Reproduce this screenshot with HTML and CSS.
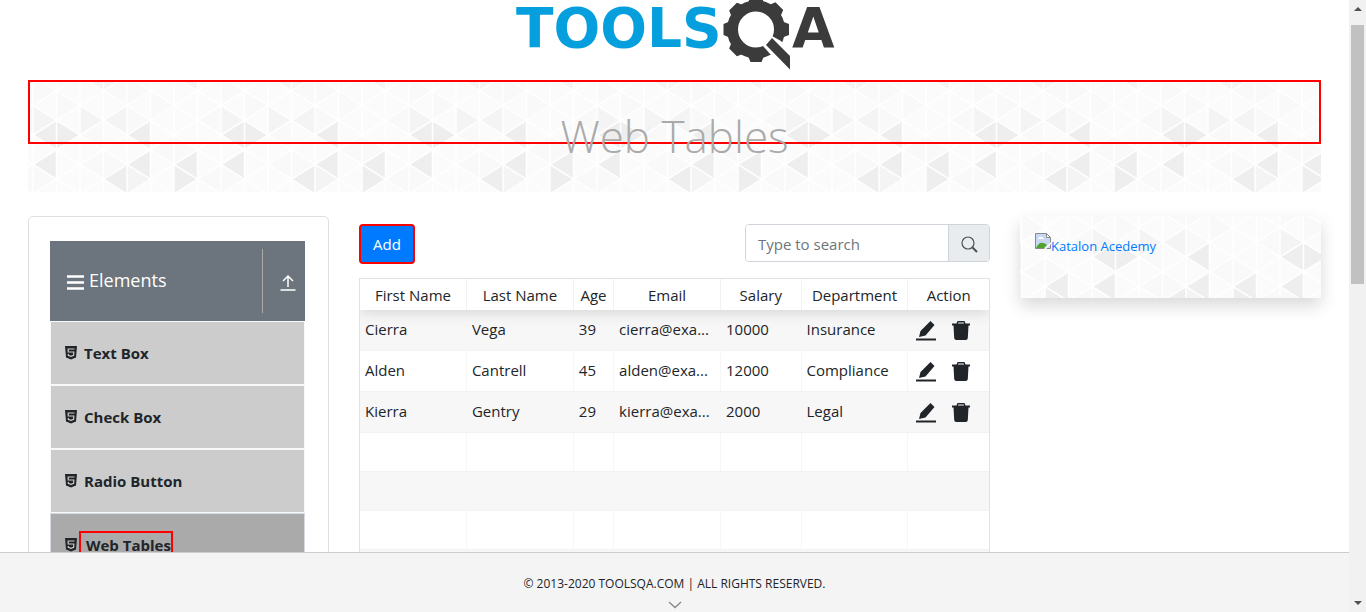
FILE: index.html
```html
<!DOCTYPE html>
<html lang="en">
<head>
<meta charset="utf-8">
<meta name="viewport" content="width=device-width, initial-scale=1">
<title>ToolsQA - Web Tables</title>
<link rel="stylesheet" href="styles.css">
</head>
<body>
<svg class="defs" aria-hidden="true">
  <defs>
    <pattern id="tri" x="5" y="-4" width="188" height="118" patternUnits="userSpaceOnUse">
      <rect width="188" height="118" fill="#fbfbfb"/>
      <path fill="#f9f9f9" d="M23.5 14.75v29.5L47 29.5zM47 59l23.5-14.75v29.5zM70.5 14.75L94 0v29.5zM94 29.5V59l23.5-14.75zM117.5 14.75v29.5L141 29.5zM141 59v29.5l23.5-14.75zM47 88.5l23.5-14.75v29.5zM70.5 73.75v29.5L94 88.5zM164.5 44.25L188 29.5V59zM117.5 73.75L141 59v29.5zM0 88.5V118l23.5-14.75zM94 0v29.5l23.5-14.75zM164.5 103.25L188 88.5V118zM0 0v29.5l23.5-14.75z"/>
      <path fill="#f4f4f4" d="M0 29.5V59l23.5-14.75zM47 29.5V59l23.5-14.75zM70.5 44.25L94 29.5V59zM70.5 14.75v-29.5L94 0zM47 0l23.5-14.75v29.5zM94 88.5V118l23.5-14.75zM141 0l23.5-14.75v29.5z"/>
      <path fill="#eee" d="M0 59l23.5-14.75v29.5zM23.5 44.25v29.5L47 59zM94 59l23.5-14.75v29.5zM0 88.5l23.5-14.75v29.5zM94 88.5l23.5-14.75v29.5zM141 88.5l23.5-14.75v29.5zM141 88.5V118l23.5-14.75zM70.5 103.25L94 88.5V118z"/>
      <path fill="none" stroke="#fff" stroke-width="1.5" d="M0 0v118M23.5 0v118M47 0v118M70.5 0v118M94 0v118M117.5 0v118M141 0v118M164.5 0v118M188 0v118M0 0l188 118M0 29.5l188 118M0 59l188 118M0 88.5l188 118M0-29.5l188 118M0-59L188 59M0-88.5l188 118M0-118L188 0M0 0l188-118M0 29.5l188-118M0 59L188-59M0 88.5l188-118M0 118L188 0M0 147.5l188-118M0 177L188 59M0 206.5l188-118"/>
    </pattern>
    <pattern id="tri-card" href="#tri" x="72" y="-18"/>
    <symbol id="html5" viewBox="0 0 12 14"><path fill="currentColor" d="M0 0h12l-1 11.500-5 2-5-2z"/><path fill="none" stroke="#ccc" stroke-width="1.200" d="M9.500 3H3.200v3h5.600l-.2 3.300-2.600 1-2.700-1V8"/></symbol>
    <symbol id="pencil" viewBox="0 0 20 20"><path fill="currentColor" d="M14.500 0l4 4-9 10.500-6.500 1.500 1.500-6zM0 17.500h20v2H0z"/></symbol>
    <symbol id="trash" viewBox="0 0 18 19"><path fill="currentColor" fill-rule="evenodd" d="M5.500 0h7l1 2.500H18v2h-1.500L15.800 17q-.2 2-2 2H4.200q-1.800 0-2-2L1.500 4.500H0v-2h4.500zm.8 1.500l-.4 1h6.200l-.4-1z"/></symbol>
  </defs>
</svg>

<div class="page">
  <main class="content">
    <header class="brand">
      <a href="#" aria-label="ToolsQA home">
        <svg class="logo" viewBox="0 0 350 75" aria-hidden="true">
          <text class="logo-blue" x="16" y="47">TOOLS</text>
          <g fill="#3b3b3c">
            <circle cx="256" cy="29.500" r="23.500" fill="none" stroke="#3b3b3c" stroke-width="11"/>
            <path d="M248 3l2.500-6.500h11l2.500 6.500zM248 56l2.500 6h11l2.500-6z"/>
            <path d="M248 3l2.500-6.500h11l2.500 6.500zM248 56l2.500 6h11l2.500-6z" transform="rotate(45 256 29.500)"/>
            <path d="M248 3l2.500-6.500h11l2.500 6.500zM248 56l2.500 6h11l2.500-6z" transform="rotate(90 256 29.500)"/>
            <path d="M248 3l2.500-6.500h11l2.500 6.500zM248 56l2.500 6h11l2.500-6z" transform="rotate(135 256 29.500)"/>
            <path fill="#fff" d="M263 46l9-10 9 5 12 14v18h-6z"/>
            <path d="M266 45l6-7 18 18v13.500z"/>
          </g>
          <text class="logo-dark" x="292" y="47">A</text>
        </svg>
      </a>
    </header>

    <section class="banner">
      <svg class="texture" aria-hidden="true"><rect width="100%" height="100%" fill="url(#tri)"/></svg>
      <div class="banner-mark"></div>
      <h1 class="banner-title">Web Tables</h1>
    </section>

    <div class="columns">
      <nav class="sidebar" aria-label="Elements">
        <div class="group">
          <svg class="burger" viewBox="0 0 17 15" aria-hidden="true"><path stroke="#fff" stroke-width="2.500" d="M0 1.500h17M0 7.500h17M0 13.500h17"/></svg>
          <span class="group-name">Elements</span>
          <button class="collapse" aria-label="Collapse group">
            <svg viewBox="0 0 16 17" width="16" height="17" aria-hidden="true"><path fill="none" stroke="#fff" stroke-width="1.500" d="M8 13V2M3 7l5-5 5 5M.5 16h15"/></svg>
          </button>
        </div>
        <ul class="menu">
          <li><a href="#"><svg class="menu-icon"><use href="#html5"/></svg><span>Text Box</span></a></li>
          <li><a href="#"><svg class="menu-icon"><use href="#html5"/></svg><span>Check Box</span></a></li>
          <li><a href="#"><svg class="menu-icon"><use href="#html5"/></svg><span>Radio Button</span></a></li>
          <li class="active"><a href="#"><svg class="menu-icon"><use href="#html5"/></svg><span class="marked">Web Tables</span></a></li>
        </ul>
      </nav>

      <section class="workspace">
        <div class="toolbar">
          <button class="add">Add</button>
          <form class="search">
            <input type="text" placeholder="Type to search" aria-label="Type to search">
            <button type="button" aria-label="Search">
              <svg viewBox="0 0 17 17" width="17" height="17" aria-hidden="true"><circle cx="7" cy="7" r="6" fill="none" stroke="#495057" stroke-width="1.200"/><path stroke="#495057" stroke-width="2" d="M11.500 11.500l4.500 4.500"/></svg>
            </button>
          </form>
        </div>
        <div class="table-wrap">
          <table>
            <colgroup><col class="c-wide"><col class="c-wide"><col class="c-age"><col class="c-wide"><col class="c-mid"><col class="c-wide"><col class="c-mid"></colgroup>
            <thead>
              <tr><th>First Name</th><th>Last Name</th><th>Age</th><th>Email</th><th>Salary</th><th>Department</th><th>Action</th></tr>
            </thead>
            <tbody>
              <tr class="filled"><td>Cierra</td><td>Vega</td><td>39</td><td>cierra@exa...</td><td>10000</td><td>Insurance</td><td><div class="actions"><button aria-label="Edit"><svg class="edit"><use href="#pencil"/></svg></button><button aria-label="Delete"><svg class="trash"><use href="#trash"/></svg></button></div></td></tr>
              <tr class="filled"><td>Alden</td><td>Cantrell</td><td>45</td><td>alden@exa...</td><td>12000</td><td>Compliance</td><td><div class="actions"><button aria-label="Edit"><svg class="edit"><use href="#pencil"/></svg></button><button aria-label="Delete"><svg class="trash"><use href="#trash"/></svg></button></div></td></tr>
              <tr class="filled"><td>Kierra</td><td>Gentry</td><td>29</td><td>kierra@exa...</td><td>2000</td><td>Legal</td><td><div class="actions"><button aria-label="Edit"><svg class="edit"><use href="#pencil"/></svg></button><button aria-label="Delete"><svg class="trash"><use href="#trash"/></svg></button></div></td></tr>
              <tr><td></td><td></td><td></td><td></td><td></td><td></td><td></td></tr>
              <tr><td></td><td></td><td></td><td></td><td></td><td></td><td></td></tr>
              <tr><td></td><td></td><td></td><td></td><td></td><td></td><td></td></tr>
              <tr><td></td><td></td><td></td><td></td><td></td><td></td><td></td></tr>
            </tbody>
          </table>
        </div>
      </section>

      <aside class="promo">
        <svg class="texture" aria-hidden="true"><rect width="100%" height="100%" fill="url(#tri-card)"/></svg>
        <a href="#">
          <svg class="broken" viewBox="0 0 16 16" aria-hidden="true">
            <path fill="#c8d8f4" stroke="#8a8a8a" d="M.5.500h11l4 4v11H.5z"/>
            <path fill="#fff" stroke="#8a8a8a" d="M11.500.500v4h4z"/>
            <path fill="#fff" d="M3 6q0-2 2-2 2-1 3 1 1 0 1 1z"/>
            <path fill="#4fa32f" d="M1 15q3-6 7-5 2 0 4 2l-3 3z"/>
            <path fill="#fff" d="M9 16l7-7v2l-5 5z"/>
          </svg><span>Katalon Acedemy</span>
        </a>
      </aside>
    </div>
  </main>

  <footer class="footer">
    <span>© 2013-2020 TOOLSQA.COM | ALL RIGHTS RESERVED.</span>
    <svg class="chevron" viewBox="0 0 14 8" aria-hidden="true"><path fill="none" stroke="#888" stroke-width="1.300" d="M1 1l6 5.500L13 1"/></svg>
  </footer>
</div>

<div class="scrollbar" aria-hidden="true">
  <svg viewBox="0 0 8 4"><path fill="#505050" d="M0 4l4-4 4 4z"/></svg>
  <div class="track"><div class="thumb"></div></div>
  <svg viewBox="0 0 8 4"><path fill="#505050" d="M0 0l4 4 4-4z"/></svg>
</div>
</body>
</html>
```
FILE: styles.css
```css
* { box-sizing: border-box; }

body {
  margin: 0;
  height: 100vh;
  display: flex;
  overflow: hidden;
  background: #fff;
  color: #212529;
  font: 15px/24px "Open Sans", "Noto Sans", sans-serif;
}

button, input { font: inherit; color: inherit; }
button { cursor: pointer; }
a { text-decoration: none; }

.defs { position: absolute; width: 0; height: 0; }

.page {
  flex: 1;
  min-width: 0;
  display: flex;
  flex-direction: column;
}

.content {
  flex: 1;
  min-height: 0;
  overflow: hidden;
  padding: 0 28px;
}

.brand {
  height: 80px;
  display: flex;
  justify-content: center;
}
.logo { display: block; width: 350px; height: 75px; overflow: visible; }
.logo text { font: bold 55px "DejaVu Sans", sans-serif; }
.logo-blue { fill: #069fde; }
.logo-dark { fill: #3b3b3c; }

.texture {
  position: absolute;
  inset: 0;
  width: 100%;
  height: 100%;
}

.banner {
  position: relative;
  padding: 26px 0;
  text-align: center;
}
.banner-mark {
  position: absolute;
  inset: 0 0 48px;
  border: 2px solid #f00;
}
.banner-title {
  position: relative;
  margin: 0;
  font-size: 44px;
  line-height: 60px;
  font-weight: 300;
  color: #aaa;
}

.columns {
  display: grid;
  grid-template-columns: minmax(0, 301fr) minmax(0, 631fr) minmax(0, 301fr);
  gap: 30px;
  align-items: start;
  margin-top: 24px;
}

.sidebar {
  padding: 24px 23px 24px 21px;
  border: 1px solid #dedfe0;
  border-radius: 5px;
}
.group {
  display: flex;
  align-items: center;
  height: 80px;
  padding-left: 17px;
  background: #6c757d;
  color: #fff;
  font-size: 18px;
}
.burger { width: 17px; height: 15px; margin: 3px 5px 0 0; }
.group-name { flex: 1; padding-bottom: 2px; }
.collapse {
  width: 43px;
  height: 64px;
  padding: 6px 0 0 8px;
  border: 0;
  border-left: 1px solid #aaa;
  background: none;
}

.menu { margin: 0; padding: 0; list-style: none; }
.menu li { border: 1px solid #f8f9fa; background: #ccc; }
.menu .active { background: #aaa; border-color: #d5dbe0; }
.menu a {
  display: flex;
  align-items: center;
  height: 62px;
  padding-left: 14px;
  color: #212529;
  font-weight: 700;
}
.menu-icon { width: 12px; height: 14px; margin-right: 2px; }
.menu span { padding-left: 5px; }
.menu .marked { border: 2px solid #f00; }

.toolbar {
  display: flex;
  justify-content: space-between;
  align-items: flex-start;
  padding: 8px 0 14px;
}
.add {
  height: 40px;
  padding: 0 12px;
  border: 2px solid #f00;
  border-radius: 4px;
  background: #007bff;
  color: #fff;
}
.search {
  display: flex;
  width: 245px;
  height: 38px;
  border: 1px solid #ced4da;
  border-radius: 4px;
  overflow: hidden;
}
.search input {
  flex: 1;
  min-width: 0;
  padding: 2px 12px 0;
  border: 0;
  background: #fff;
}
.search input::placeholder { color: #6c757d; opacity: 1; }
.search button {
  width: 41px;
  padding: 8px 0 0;
  border: 0;
  border-left: 1px solid #ced4da;
  background: #e9ecef;
}

.table-wrap { border: 1px solid #e2e2e2; overflow: hidden; }
table {
  width: 100%;
  table-layout: fixed;
  border-spacing: 0;
}
.c-wide { width: 17%; }
.c-age { width: 6.400%; }
.c-mid { width: 12.800%; }
thead {
  position: relative;
  z-index: 1;
  background: #fff;
  box-shadow: 0 2px 15px rgba(0, 0, 0, 0.15);
}
th {
  height: 31px;
  padding: 0;
  border-right: 1px solid #f2f2f2;
  font-weight: 400;
}
td {
  height: 39px;
  padding: 0 5px 2px;
  border-right: 1px solid #f6f6f6;
  border-bottom: 1px solid #f2f2f2;
  white-space: nowrap;
}
th:last-child, td:last-child { border-right: 0; }
.filled td { height: 41px; }
tbody tr:nth-child(odd) { background: #f7f7f7; }
.actions { display: flex; gap: 16px; padding: 4px 0 0 3px; }
.actions button { display: flex; padding: 0; border: 0; background: none; }
.edit { width: 20px; height: 20px; }
.trash { width: 18px; height: 19px; }

.promo {
  position: relative;
  min-height: 82px;
  padding: 17px 15px;
  box-shadow: 0 8px 16px rgba(0, 0, 0, 0.15);
  font-size: 13px;
}
.promo a {
  position: relative;
  display: flex;
  align-items: flex-start;
  color: #007bff;
}
.promo span { padding-top: 1px; }
.broken { width: 16px; height: 16px; }

.footer {
  display: flex;
  flex-direction: column;
  align-items: center;
  gap: 5px;
  padding: 19px 0 3px;
  border-top: 1px solid #ccc;
  background: #f4f4f4;
  font-size: 12px;
}
.chevron { width: 14px; height: 8px; }

.scrollbar {
  display: flex;
  flex-direction: column;
  align-items: center;
  width: 17px;
  padding: 7px 0;
  background: #f1f1f1;
}
.scrollbar svg { width: 8px; height: 4px; }
.track { flex: 1; width: 13px; padding-top: 14px; }
.thumb { height: 45%; background: #c1c1c1; }
```
